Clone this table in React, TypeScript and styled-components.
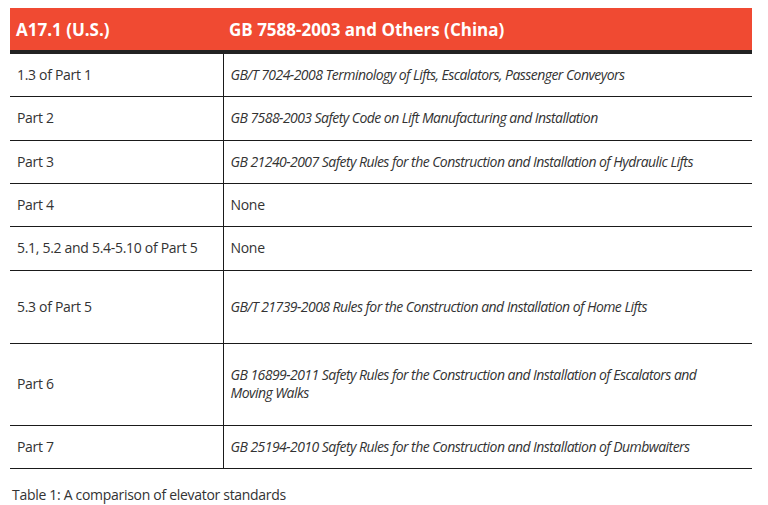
import { FC } from "react";
import styled, { createGlobalStyle } from "styled-components";

const GlobalStyle = createGlobalStyle`
  html, body {
    margin: 0;
    padding: 0;
    background: #ffffff;
  }
  body {
    font-family: "Open Sans", "Noto Sans", sans-serif;
    color: #333333;
  }
`;

const Wrapper = styled.main`
  width: 768px;
  height: 505px;
  padding: 8px 0 0 10px;
  box-sizing: border-box;
`;

const Table = styled.table`
  width: 742px;
  border-collapse: collapse;
  table-layout: fixed;
`;

const HeadCell = styled.th<{ $w: number }>`
  box-sizing: border-box;
  width: ${(p) => p.$w}px;
  height: 44px;
  padding: 0 0 0 6px;
  background-color: #f04a32;
  color: #ffffff;
  font-size: 17px;
  font-weight: 700;
  text-align: left;
  vertical-align: middle;
  border-bottom: 4px solid #222222;
`;

const Row = styled.tr<{ $h: number }>`
  height: ${(p) => p.$h}px;
`;

const Cell = styled.td<{ $italic?: boolean }>`
  padding: 0 20px 0 7px;
  font-size: 14px;
  line-height: 18px;
  font-style: ${(p) => (p.$italic ? "italic" : "normal")};
  letter-spacing: ${(p) => (p.$italic ? "-0.55px" : "-0.3px")};
  vertical-align: middle;
  border-bottom: 1px solid #1a1a1a;

  & + & {
    border-left: 1px solid #1a1a1a;
  }
`;

const Caption = styled.p`
  margin: 16px 0 0 2px;
  font-size: 14px;
  letter-spacing: -0.3px;
  color: #333333;
`;

const rows: { part: string; std: string; h: number; italic: boolean }[] = [
  { part: "1.3 of Part 1", std: "GB/T 7024-2008 Terminology of Lifts, Escalators, Passenger Conveyors", h: 44, italic: true },
  { part: "Part 2", std: "GB 7588-2003 Safety Code on Lift Manufacturing and Installation", h: 44, italic: true },
  { part: "Part 3", std: "GB 21240-2007 Safety Rules for the Construction and Installation of Hydraulic Lifts", h: 43, italic: true },
  { part: "Part 4", std: "None", h: 43, italic: false },
  { part: "5.1, 5.2 and 5.4-5.10 of Part 5", std: "None", h: 44, italic: false },
  { part: "5.3 of Part 5", std: "GB/T 21739-2008 Rules for the Construction and Installation of Home Lifts", h: 73, italic: true },
  { part: "Part 6", std: "GB 16899-2011 Safety Rules for the Construction and Installation of Escalators and Moving Walks", h: 82, italic: true },
  { part: "Part 7", std: "GB 25194-2010 Safety Rules for the Construction and Installation of Dumbwaiters", h: 43, italic: true },
];

const App: FC = () => {
  return (
    <Wrapper>
      <GlobalStyle />
      <Table>
        <thead>
          <tr>
            <HeadCell $w={213}>A17.1 (U.S.)</HeadCell>
            <HeadCell $w={529}>GB 7588-2003 and Others (China)</HeadCell>
          </tr>
        </thead>
        <tbody>
          {rows.map((r) => (
            <Row key={r.part} $h={r.h}>
              <Cell>{r.part}</Cell>
              <Cell $italic={r.italic}>{r.std}</Cell>
            </Row>
          ))}
        </tbody>
      </Table>
      <Caption>Table 1: A comparison of elevator standards</Caption>
    </Wrapper>
  );
};

export default App;
